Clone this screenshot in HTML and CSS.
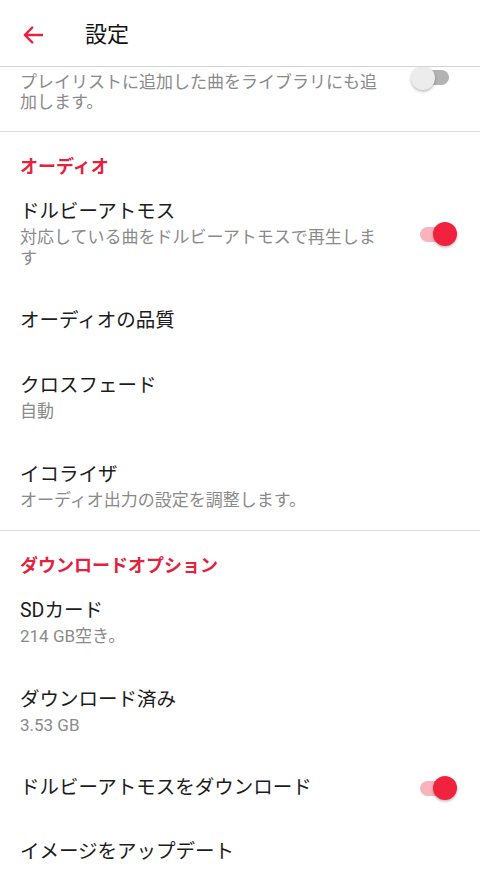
FILE: index.html
```html
<!DOCTYPE html>
<html lang="ja">
<head>
<meta charset="utf-8">
<title>設定</title>
<link rel="stylesheet" href="styles.css">
</head>
<body>
<header class="appbar">
  <svg class="back" width="20" height="18" viewBox="0 0 20 18" aria-hidden="true">
    <path d="M19.5 9 H2.2 M9.2 1.6 L1.8 9 L9.2 16.4" fill="none" stroke="#e8233f" stroke-width="2.4" stroke-linecap="round" stroke-linejoin="round"/>
  </svg>
  <h1 class="appbar-title">設定</h1>
</header>

<main class="list">
  <div class="row partial">
    <div class="text">
      <p class="sub tight">プレイリストに追加した曲をライブラリにも追加します。</p>
    </div>
    <div class="switch off partial-switch"><span class="track"></span><span class="knob"></span></div>
  </div>

  <section class="group">
    <h2 class="group-title">オーディオ</h2>
    <div class="row has-sub">
      <div class="text">
        <p class="title">ドルビーアトモス</p>
        <p class="sub">対応している曲をドルビーアトモスで再生します</p>
      </div>
      <div class="switch on"><span class="track"></span><span class="knob"></span></div>
    </div>
    <div class="row">
      <div class="text"><p class="title">オーディオの品質</p></div>
    </div>
    <div class="row has-sub">
      <div class="text">
        <p class="title">クロスフェード</p>
        <p class="sub">自動</p>
      </div>
    </div>
    <div class="row has-sub">
      <div class="text">
        <p class="title">イコライザ</p>
        <p class="sub">オーディオ出力の設定を調整します。</p>
      </div>
    </div>
  </section>

  <section class="group">
    <h2 class="group-title">ダウンロードオプション</h2>
    <div class="row has-sub">
      <div class="text">
        <p class="title">SDカード</p>
        <p class="sub">214 GB空き。</p>
      </div>
    </div>
    <div class="row has-sub">
      <div class="text">
        <p class="title">ダウンロード済み</p>
        <p class="sub">3.53 GB</p>
      </div>
    </div>
    <div class="row">
      <div class="text"><p class="title">ドルビーアトモスをダウンロード</p></div>
      <div class="switch on"><span class="track"></span><span class="knob"></span></div>
    </div>
    <div class="row">
      <div class="text"><p class="title">イメージをアップデート</p></div>
    </div>
  </section>
</main>
</body>
</html>
```

FILE: styles.css
```css
* { box-sizing: border-box; }

html, body {
  margin: 0;
  padding: 0;
  background: #ffffff;
}

body {
  width: 480px;
  height: 883px;
  overflow: hidden;
  font-family: Roboto, "Noto Sans CJK JP", sans-serif;
  color: #1c1c1c;
}

p, h1, h2 { margin: 0; }

.appbar {
  height: 67px;
  display: flex;
  align-items: center;
  border-bottom: 1px solid #d4d4d4;
}

.back {
  display: block;
  margin-left: 23px;
  margin-top: 4px;
  flex: none;
}

.appbar-title {
  margin-left: 42px;
  margin-top: 4px;
  font-size: 22px;
  font-weight: 400;
  line-height: 30px;
  color: #111111;
}

.list {
  display: flex;
  flex-direction: column;
}

.row {
  display: flex;
  align-items: center;
  padding: 20px 23px 18px 20px;
}

.row.has-sub {
  padding-top: 21px;
  padding-bottom: 19px;
}

.row.partial {
  height: 64px;
  padding-top: 0;
  padding-bottom: 19px;
  align-items: flex-end;
  overflow: hidden;
}

.text {
  flex: 1;
  max-width: 365px;
  margin-right: auto;
}

.title {
  font-size: 19.5px;
  line-height: 26px;
  color: #1c1c1c;
}

.sub {
  margin-top: 2px;
  font-size: 17px;
  line-height: 21px;
  color: #8a8a8a;
}

.sub.tight {
  margin-top: 0;
  line-height: 20px;
}

.group {
  border-top: 1px solid #dcdcdc;
}

.group-title {
  padding: 23px 20px 0;
  font-size: 18px;
  font-weight: 700;
  line-height: 23px;
  color: #e3223d;
}

.switch {
  position: relative;
  flex: none;
  width: 37px;
  height: 24px;
}

.switch .track {
  position: absolute;
  top: 4.5px;
  height: 15px;
  border-radius: 7.5px;
}

.switch .knob {
  position: absolute;
  top: 0;
  width: 24px;
  height: 24px;
  border-radius: 50%;
  box-shadow: 0 1.5px 3px rgba(0, 0, 0, 0.28);
}

.switch.on .track {
  left: 0;
  width: 32px;
  background: #f9b3bf;
}

.switch.on .knob {
  right: 0;
  background: #f0223e;
}

.switch.off .track {
  left: 4px;
  width: 34px;
  background: #b3b3b3;
}

.switch.off .knob {
  left: 0;
  background: #ececec;
}

.partial-switch {
  align-self: flex-start;
  margin-top: -1.5px;
  margin-right: 9px;
}
```
